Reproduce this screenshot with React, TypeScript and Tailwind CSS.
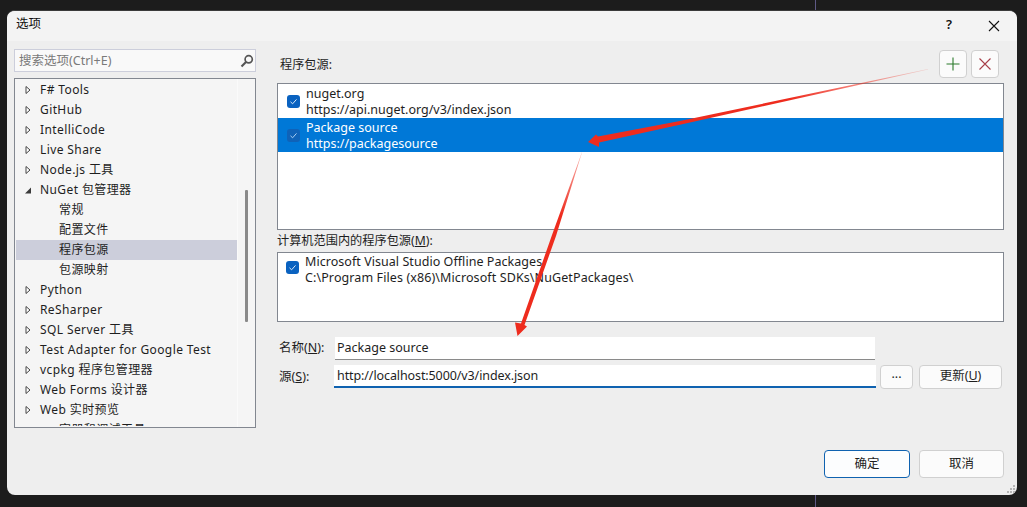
import React from "react";

const font = { fontFamily: '"Noto Sans","Noto Sans CJK SC",sans-serif' };

function Tri({ open }: { open?: boolean }) {
  return (
    <svg width="8" height="10" viewBox="0 0 8 10" className="shrink-0">
      {open ? (
        <path d="M1 8.5H7V2.5Z" fill="#3a3a3a" />
      ) : (
        <path d="M2 1.5V8.5L6 5Z" fill="#fff" stroke="#444" strokeWidth="1" />
      )}
    </svg>
  );
}

const rows: { t: string; kind: "c" | "o" | "s" | "sel" }[] = [
  { t: "F# Tools", kind: "c" },
  { t: "GitHub", kind: "c" },
  { t: "IntelliCode", kind: "c" },
  { t: "Live Share", kind: "c" },
  { t: "Node.js 工具", kind: "c" },
  { t: "NuGet 包管理器", kind: "o" },
  { t: "常规", kind: "s" },
  { t: "配置文件", kind: "s" },
  { t: "程序包源", kind: "sel" },
  { t: "包源映射", kind: "s" },
  { t: "Python", kind: "c" },
  { t: "ReSharper", kind: "c" },
  { t: "SQL Server 工具", kind: "c" },
  { t: "Test Adapter for Google Test", kind: "c" },
  { t: "vcpkg 程序包管理器", kind: "c" },
  { t: "Web Forms 设计器", kind: "c" },
  { t: "Web 实时预览", kind: "c" },
  { t: "容器和调试工具", kind: "s" },
];

function Check({ dim }: { dim?: boolean }) {
  return (
    <div className={`w-[13px] h-[13px] rounded-[3px] flex items-center justify-center shrink-0 ${dim ? "bg-[#0f62b8]" : "bg-[#0a62c0]"}`}>
      <svg width="9" height="9" viewBox="0 0 9 9">
        <path d="M1.5 4.8L3.6 6.8L7.5 2.4" fill="none" stroke={dim ? "#a9cdf0" : "#d8e8f8"} strokeWidth="1" />
      </svg>
    </div>
  );
}

function Btn({ className, children }: { className: string; children: React.ReactNode }) {
  return (
    <div className={`flex items-center justify-center bg-[#fbfbfb] border border-[#d0d0d0] rounded-[4px] text-[12.5px] text-[#1e1e1e] ${className}`}>
      {children}
    </div>
  );
}

export default function App() {
  return (
    <div className="relative w-[1027px] h-[507px] bg-[#1c1c1c] pt-[10px] pl-[7px] overflow-hidden" style={font}>
      <div className="absolute left-[815px] top-0 w-px h-[10px] bg-[#5f5a86]" />
      <div className="absolute left-[815px] top-[495px] w-px h-[12px] bg-[#5f5a86]" />
      <div className="w-[1010px] h-[485px] bg-[#eeeeee] rounded-[8px] overflow-hidden flex flex-col border-t border-[#3a3a3a] text-[12.5px] text-[#1e1e1e]">
        <div className="h-[30px] bg-[#f3f3f3] flex items-center pl-[9px] pb-[4px] shrink-0">
          <span className="text-[12.5px] text-[#111]">选项</span>
          <span className="ml-auto text-[13px] font-semibold text-[#111] mr-[36px] mt-[2px]">?</span>
          <svg width="12" height="12" viewBox="0 0 12 12" className="mr-[17px] mt-[4px]">
            <path d="M1 1L11 11M11 1L1 11" stroke="#111" strokeWidth="1.1" />
          </svg>
        </div>
        <div className="flex flex-1 min-h-0">
          <div className="w-[249px] pl-[7px] pt-[8px] shrink-0">
            <div className="h-[23px] border border-[#cccedb] bg-[#f9f9f9] flex items-center pl-[4px] pr-[1px] text-[#7a7a7a]">
              <span className="text-[12.5px] pt-px">搜索选项(Ctrl+E)</span>
              <svg width="14" height="14" viewBox="0 0 14 14" className="ml-auto">
                <circle cx="8.7" cy="5.3" r="3.6" fill="none" stroke="#555" strokeWidth="1.7" />
                <path d="M6 8L1.5 12.5" stroke="#555" strokeWidth="2.2" />
              </svg>
            </div>
            <div className="mt-[6px] h-[350px] border border-[#828790] bg-[#f5f5f5] flex overflow-hidden">
              <div className="flex-1 pl-px h-[347px] overflow-hidden text-[12px] tracking-[0.4px]">
                <div className="pt-px">
                  {rows.map((r) => (
                    <div key={r.t} className={`h-[20px] flex items-center leading-[20px] whitespace-nowrap ${r.kind === "sel" ? "bg-[#cccedb]" : ""}`}>
                      {r.kind === "s" || r.kind === "sel" ? (
                        <span className="pl-[43px]">{r.t}</span>
                      ) : (
                        <>
                          <span className="ml-[8px] w-[16px]"><Tri open={r.kind === "o"} /></span>
                          <span>{r.t}</span>
                        </>
                      )}
                    </div>
                  ))}
                </div>
              </div>
              <div className="w-[18px] shrink-0 bg-[#f5f5f5] border-l border-[#fafafa] flex justify-center">
                <div className="w-[3px] h-[132px] mt-[111px] bg-[#8a8a8a] rounded-[1px]" />
              </div>
            </div>
          </div>
          <div className="flex-1 pl-[21px] pr-[13px] min-w-0">
            <div className="h-[42px] relative">
              <div className="flex items-center h-[28px] pt-[9px] pl-[3px]">
                <span className="mt-[12px] text-[12.2px]">程序包源:</span>
                <div className="ml-auto mr-[5px] flex gap-[4px] mt-[9px]">
                  <Btn className="w-[28px] h-[28px]">
                    <svg width="14" height="14" viewBox="0 0 14 14"><path d="M7 0.5V13.5M0.5 7H13.5" stroke="#2a7a2a" strokeWidth="1.1" /></svg>
                  </Btn>
                  <Btn className="w-[28px] h-[28px]">
                    <svg width="12" height="12" viewBox="0 0 12 12"><path d="M0.5 0.5L11.5 11.5M11.5 0.5L0.5 11.5" stroke="#a8404a" strokeWidth="1.1" /></svg>
                  </Btn>
                </div>
              </div>
            </div>
            <div className="h-[147px] border border-[#828790] bg-white">
              <div className="h-[34px] flex items-center pl-[9px]">
                <Check />
                <div className="ml-[6px] leading-[16px] pt-px">
                  <div>nuget.org</div>
                  <div>https://api.nuget.org/v3/index.json</div>
                </div>
              </div>
              <div className="h-[34px] flex items-center pl-[9px] bg-[#0078d7] text-white">
                <Check dim />
                <div className="ml-[6px] leading-[16px] pt-px">
                  <div>Package source</div>
                  <div>https://packagesource</div>
                </div>
              </div>
            </div>
            <div className="h-[22px] leading-[22px] whitespace-nowrap text-[12.2px]">计算机范围内的程序包源(<span className="underline">M</span>):</div>
            <div className="h-[70px] border border-[#828790] bg-white flex items-start pl-[8px] pt-px">
              <div className="mt-[7px]"><Check /></div>
              <div className="ml-[6px] leading-[16px]">
                <div className="tracking-[0.05px]">Microsoft Visual Studio Offline Packages</div>
                <div className="tracking-[0.1px]">C:\Program Files (x86)\Microsoft SDKs\NuGetPackages\</div>
              </div>
            </div>
            <div className="mt-[15px] flex items-center h-[23px]">
              <span className="w-[58px] pl-[2px] whitespace-nowrap">名称(<span className="underline">N</span>):</span>
              <div className="w-[540px] h-[23px] bg-white border-b border-[#8a8a8a] flex items-center pl-[2px]">Package source</div>
            </div>
            <div className="mt-[4px] flex items-center h-[25px]">
              <span className="w-[57px] pl-[2px] pt-px whitespace-nowrap">源(<span className="underline">S</span>):</span>
              <div className="w-[542px] h-[23px] bg-white border-b-2 border-[#0f62b0] flex items-center pl-[3px] pt-px tracking-[-0.1px]">http://localhost:5000/v3/index.json</div>
              <Btn className="w-[33px] h-[24px] ml-[4px] pb-[4px]">...</Btn>
              <Btn className="w-[83px] h-[24px] ml-[6px]">更新(<span className="underline">U</span>)</Btn>
            </div>
            <div className="mt-[61px] flex justify-end gap-[9px]">
              <Btn className="w-[86px] h-[28px] !border-[#0f62b0] !bg-[#fcfdfe]">确定</Btn>
              <Btn className="w-[85px] h-[28px]">取消</Btn>
            </div>
          </div>
        </div>
      </div>
      <svg className="absolute left-[1007px] top-[485px]" width="9" height="9" viewBox="0 0 9 9">
        <path d="M6 0h2v2H6zM3 3h2v2H3zM6 3h2v2H6zM0 6h2v2H0zM3 6h2v2H3zM6 6h2v2H6z" fill="#b5b5b5" />
      </svg>
      <svg className="absolute left-0 top-0 pointer-events-none" width="1027" height="507" viewBox="0 0 1027 507">
        <defs>
          <linearGradient id="fade1" x1="928" y1="69" x2="790" y2="98" gradientUnits="userSpaceOnUse">
            <stop offset="0" stopColor="#ee2c1e" stopOpacity="0.15" />
            <stop offset="1" stopColor="#ee2c1e" />
          </linearGradient>
          <linearGradient id="fade2" x1="582" y1="152" x2="560" y2="215" gradientUnits="userSpaceOnUse">
            <stop offset="0" stopColor="#ee2c1e" stopOpacity="0.35" />
            <stop offset="1" stopColor="#ee2c1e" />
          </linearGradient>
        </defs>
        <path d="M928 69L680 121L598 136.5L596 134.5L588 142L599 147L599 142.5L681 124.5L928 69.5Z" fill="url(#fade1)" />
        <path d="M582 152L552 235L521 323.5L515 322.5L517.5 336L527 326.5L524.5 325L556 236L582 152.5Z" fill="url(#fade2)" />
      </svg>
    </div>
  );
}
